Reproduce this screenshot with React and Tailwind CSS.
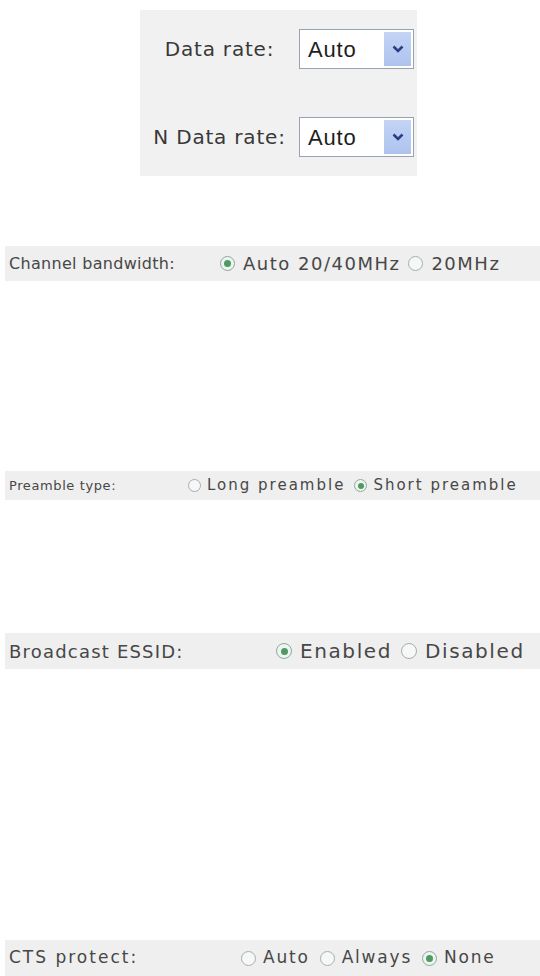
import React from "react";

const font = { fontFamily: '"DejaVu Sans", Verdana, sans-serif' };

function Radio({ checked, size }) {
  return (
    <span
      className={`inline-flex shrink-0 items-center justify-center rounded-full border ${
        checked ? "border-[#8fa99a] bg-[#eef4f0]" : "border-[#a7adb2] bg-[#f6f7f7]"
      }`}
      style={{ width: size, height: size }}
    >
      {checked && (
        <span
          className="rounded-full bg-[#4e9a62]"
          style={{ width: Math.round(size * 0.45), height: Math.round(size * 0.45) }}
        />
      )}
    </span>
  );
}

function Select() {
  return (
    <div className="flex h-[40px] w-[115px] items-stretch border border-[#98a3b1] bg-white p-[2px]">
      <span
        className="flex flex-1 items-center pl-[6px] text-[22px] text-[#1e1e1e]"
        style={{ fontFamily: '"Liberation Sans", Arial, sans-serif' }}
      >
        Auto
      </span>
      <span className="flex w-[27px] items-center justify-center bg-gradient-to-b from-[#c3d4f5] to-[#aec3ee]">
        <svg width="14" height="10" viewBox="0 0 14 10">
          <path d="M2.5 2.5 L7 7 L11.5 2.5" fill="none" stroke="#2a3f86" strokeWidth="2.6" />
        </svg>
      </span>
    </div>
  );
}

function OptionRow({ label, options, labelClass, optionClass, radioSize, heightClass, labelWidth, innerGap, itemGap }) {
  return (
    <div className={`ml-[5px] flex items-center bg-[#efefef] text-[#474747] ${heightClass}`}>
      <span className={`shrink-0 pl-[4px] ${labelClass}`} style={{ width: labelWidth }}>
        {label}
      </span>
      <div className="flex items-center" style={{ gap: itemGap }}>
        {options.map((o) => (
          <span key={o.text} className="flex items-center" style={{ gap: innerGap }}>
            <Radio checked={o.checked} size={radioSize} />
            <span className={optionClass}>{o.text}</span>
          </span>
        ))}
      </div>
    </div>
  );
}

export default function App() {
  return (
    <div className="h-[976px] w-[540px] overflow-hidden bg-white" style={font}>
      <div className="pt-[10px]">
        <div className="ml-[140px] flex h-[166px] w-[277px] flex-col justify-center gap-[48px] bg-[#f1f1f1] pr-[3px] text-[20px] tracking-[0.8px] text-[#383838]">
          <div className="flex items-center">
            <span className="flex-1 text-center">Data rate:</span>
            <Select />
          </div>
          <div className="flex items-center">
            <span className="flex-1 text-center">N Data rate:</span>
            <Select />
          </div>
        </div>
      </div>

      <div className="mt-[70px]">
        <OptionRow
          label="Channel bandwidth:"
          labelWidth={215}
          innerGap={8}
          itemGap={8}
          radioSize={15}
          heightClass="h-[35px]"
          labelClass="text-[16px] tracking-[0.3px]"
          optionClass="text-[18px] tracking-[1.5px]"
          options={[
            { text: "Auto 20/40MHz", checked: true },
            { text: "20MHz", checked: false },
          ]}
        />
      </div>

      <div className="mt-[190px]">
        <OptionRow
          label="Preamble type:"
          labelWidth={183}
          innerGap={6}
          itemGap={9}
          radioSize={13}
          heightClass="h-[29px]"
          labelClass="text-[13px] tracking-[0.6px]"
          optionClass="text-[15px] tracking-[2px]"
          options={[
            { text: "Long preamble", checked: false },
            { text: "Short preamble", checked: true },
          ]}
        />
      </div>

      <div className="mt-[133px]">
        <OptionRow
          label="Broadcast ESSID:"
          labelWidth={271}
          innerGap={8}
          itemGap={9}
          radioSize={16}
          heightClass="h-[36px]"
          labelClass="text-[18px] tracking-[1.2px]"
          optionClass="text-[20px] tracking-[1.6px]"
          options={[
            { text: "Enabled", checked: true },
            { text: "Disabled", checked: false },
          ]}
        />
      </div>

      <div className="mt-[271px]">
        <OptionRow
          label="CTS protect:"
          labelWidth={236}
          innerGap={7}
          itemGap={10}
          radioSize={15}
          heightClass="h-[36px]"
          labelClass="text-[17px] tracking-[2px]"
          optionClass="text-[17px] tracking-[1.8px]"
          options={[
            { text: "Auto", checked: false },
            { text: "Always", checked: false },
            { text: "None", checked: true },
          ]}
        />
      </div>
    </div>
  );
}
